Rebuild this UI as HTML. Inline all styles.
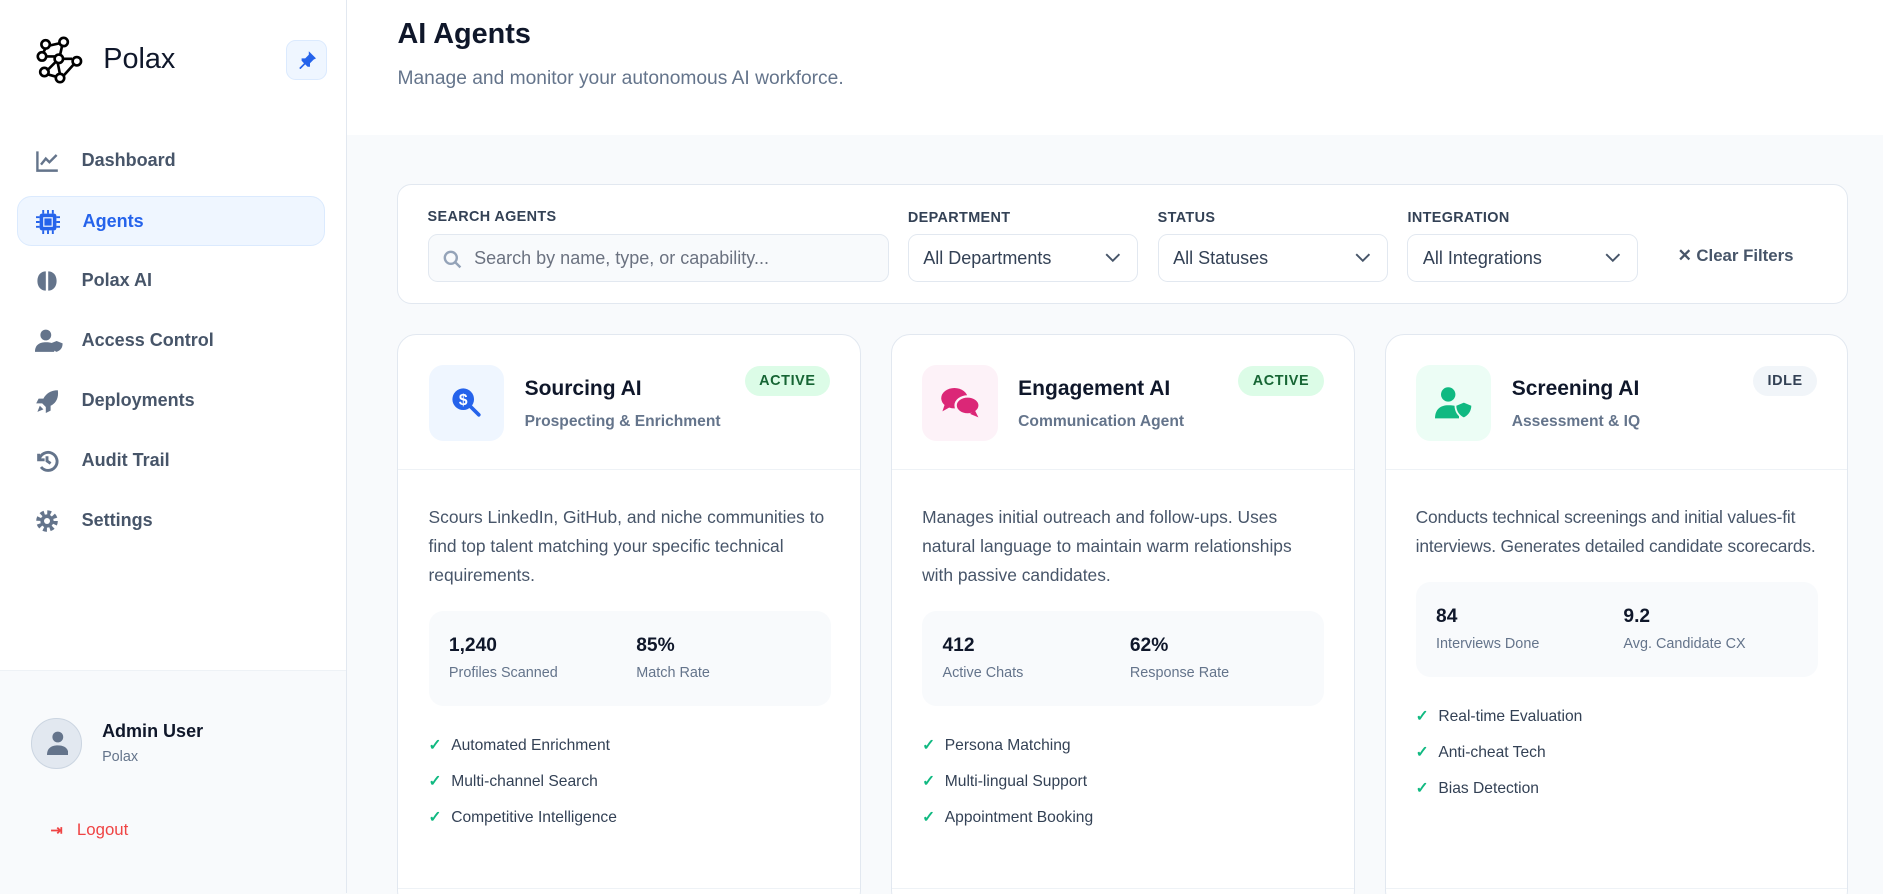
<!DOCTYPE html>
<html><head><meta charset="utf-8"><style>
*{box-sizing:border-box;margin:0;padding:0}
html,body{width:1883px;height:894px;overflow:hidden;background:#f8fafc}
#z{zoom:1.2009;width:1568px;height:744px;position:relative;font-family:"Liberation Sans",sans-serif;color:#0f172a}
.a{position:absolute}
.side{left:0;top:0;width:289px;height:744px;background:#fff;border-right:1px solid #e2e8f0}
.nav{left:14px;width:257px;height:42px;border-radius:12px;font-size:15px;color:#475569;font-weight:bold}
.nav svg{position:absolute;left:15px;top:11px}
.nav span{position:absolute;left:54px;top:12px}
.lbl{font-size:12px;font-weight:bold;color:#334155;letter-spacing:.3px}
.inp{height:40px;border:1px solid #e2e8f0;border-radius:8px;background:#f8fafc;font-size:15px;color:#334155;padding:11px 12px}
.inp svg.ch{position:absolute;right:14px;top:15px}
.card{width:386px;height:480px;background:#fff;border:1px solid #e2e8f0;border-radius:16px;top:278px;overflow:hidden}
.ib{left:25px;top:25px;width:63px;height:63px;border-radius:12px}
.t{left:105px;top:35px;font-size:17.5px;font-weight:bold}
.st{left:105px;top:65px;font-size:13px;color:#64748b;font-weight:bold}
.bd{top:26px;height:25px;border-radius:13px;font-size:12px;font-weight:bold;padding:6px 12px;letter-spacing:.5px}
.hr{left:0;right:0;top:112px;border-top:1px solid #eef2f6}
.ds{left:25px;top:140px;font-size:14.5px;line-height:24px;color:#475569;white-space:nowrap}
.sb{left:25px;width:335px;height:79px;background:#f8fafc;border-radius:12px}
.n{top:20px;font-size:16px;font-weight:bold}
.sl{top:45px;font-size:12px;color:#64748b}
.f{left:25px;font-size:13px;color:#334155}
.f b{color:#10b981;margin-right:8px;font-weight:bold}
</style></head><body><div id="z">
<div class="a side">
 <svg class="a" style="left:30px;top:30px" width="40" height="40" viewBox="0 0 40 40" fill="none" stroke="#000" stroke-width="2.2"><circle cx="8" cy="7" r="3.5"/><circle cx="23" cy="5" r="3.5"/><circle cx="5" cy="17" r="3.5"/><circle cx="19" cy="19" r="3.5"/><circle cx="34" cy="21" r="3.5"/><circle cx="7" cy="30" r="3.5"/><circle cx="20" cy="35" r="3.5"/><path d="M11 8l9-2M8 10l-2 4M8 17h8M22 19h8M22 7l-2 9M18 22l2 10M9 29l8-8M23 33l9-10M10 32l7 2"/></svg>
 <div class="a" style="left:86px;top:36px;font-size:24px">Polax</div>
 <div class="a" style="left:238px;top:33px;width:34px;height:34px;border:1px solid #dbeafe;background:#eff6ff;border-radius:8px"><svg class="a" style="left:9px;top:8px" width="16" height="16" viewBox="0 0 16 16" fill="#2563eb"><path d="M9 1l6 6-2 1-3 3 0 3-2 0-2-2-4 4-1-1 4-4-2-2 0-2 3 0 3-3z"/></svg></div>
 <div class="a nav" style="top:113px"><svg width="20" height="20" viewBox="0 0 20 20" fill="none" stroke="#64748b" stroke-width="2"><path d="M2 2v16h17M5 13l4-5 3 3 6-6"/></svg><span>Dashboard</span></div>
 <div class="a nav" style="top:163px;background:#eff6ff;border:1px solid #dbeafe;color:#2563eb"><svg width="20" height="20" viewBox="0 0 20 20"><rect x="3" y="3" width="14" height="14" rx="2" fill="#2563eb"/><rect x="6" y="6" width="8" height="8" fill="#eff6ff"/><rect x="7" y="7" width="6" height="6" fill="#2563eb"/><path d="M6 0v3M10 0v3M14 0v3M6 17v3M10 17v3M14 17v3M0 6h3M0 10h3M0 14h3M17 6h3M17 10h3M17 14h3" stroke="#2563eb" stroke-width="1.6"/></svg><span>Agents</span></div>
 <div class="a nav" style="top:213px"><svg width="20" height="20" viewBox="0 0 20 20" fill="#64748b"><path d="M9 2C5 2 2 5 2 10s3 8 7 8zM11 2c4 0 7 3 7 8s-3 8-7 8z"/></svg><span>Polax AI</span></div>
 <div class="a nav" style="top:263px"><svg width="24" height="20" viewBox="0 0 24 20" fill="#64748b"><circle cx="9" cy="5" r="4.5"/><path d="M0 19c0-6 4-8 9-8s6 1 7 2v6z"/><path d="M18 10l5 2c0 4-2 6-5 7-3-1-5-3-5-7z"/></svg><span>Access Control</span></div>
 <div class="a nav" style="top:313px"><svg width="20" height="20" viewBox="0 0 20 20" fill="#64748b"><path d="M19 1c-6 0-10 3-12 7H3l-2 4h5l3 3v5l4-2v-4c4-2 7-6 6-13zM4 14l-2 5 5-2z"/></svg><span>Deployments</span></div>
 <div class="a nav" style="top:363px"><svg width="20" height="20" viewBox="0 0 20 20" fill="none" stroke="#64748b" stroke-width="2.4"><path d="M3 4v5h5"/><path d="M3.5 9A7.5 7.5 0 1 1 5 15"/><path d="M10 6v4l3 2"/></svg><span>Audit Trail</span></div>
 <div class="a nav" style="top:413px"><svg width="20" height="20" viewBox="0 0 20 20"><circle cx="10" cy="10" r="7" fill="none" stroke="#64748b" stroke-width="4" stroke-dasharray="3 2.5"/><circle cx="10" cy="10" r="5.5" fill="#64748b"/><circle cx="10" cy="10" r="2.5" fill="#fff"/></svg><span>Settings</span></div>
 <div class="a" style="left:0;top:558px;width:288px;height:186px;background:#f8fafc;border-top:1px solid #eef2f6"></div>
 <div class="a" style="left:26px;top:598px;width:42px;height:42px;border-radius:50%;background:#e2e8f0;border:1px solid #cbd5e1"><svg class="a" style="left:12px;top:10px" width="18" height="20" viewBox="0 0 18 20" fill="#64748b"><circle cx="9" cy="5" r="4.5"/><path d="M0 20c0-6 4-8 9-8s9 2 9 8z"/></svg></div>
 <div class="a" style="left:85px;top:600px;font-size:15px;font-weight:bold">Admin User</div>
 <div class="a" style="left:85px;top:624px;font-size:12px;color:#64748b">Polax</div>
 <div class="a" style="left:42px;top:683px;font-size:14px;color:#ef4444"><span style="font-weight:bold;font-size:12px;margin-right:12px">⇥</span>Logout</div>
</div>
<div class="a" style="left:289px;top:0;width:1279px;height:112px;background:#fff"></div>
<div class="a" style="left:331px;top:15px;font-size:24px;font-weight:bold">AI Agents</div>
<div class="a" style="left:331px;top:57px;font-size:16px;color:#64748b">Manage and monitor your autonomous AI workforce.</div>
<div class="a" style="left:331px;top:153px;width:1208px;height:100px;background:#fff;border:1px solid #e2e8f0;border-radius:12px"></div>
<div class="a lbl" style="left:356px;top:174px">SEARCH AGENTS</div>
<div class="a lbl" style="left:756px;top:175px">DEPARTMENT</div>
<div class="a lbl" style="left:964px;top:175px">STATUS</div>
<div class="a lbl" style="left:1172px;top:175px">INTEGRATION</div>
<div class="a inp" style="left:356px;top:195px;width:384px;color:#6b7280;padding-left:38px"><svg class="a" style="left:12px;top:12px" width="16" height="16" viewBox="0 0 16 16" fill="none" stroke="#94a3b8" stroke-width="2"><circle cx="6.5" cy="6.5" r="5"/><path d="M10.5 10.5l4 4"/></svg>Search by name, type, or capability...</div>
<div class="a inp" style="left:756px;top:195px;width:192px;background:#fff">All Departments<svg class="ch" width="13" height="8" viewBox="0 0 13 8" fill="none" stroke="#475569" stroke-width="1.6"><path d="M1 1l5.5 5.5L12 1"/></svg></div>
<div class="a inp" style="left:964px;top:195px;width:192px;background:#fff">All Statuses<svg class="ch" width="13" height="8" viewBox="0 0 13 8" fill="none" stroke="#475569" stroke-width="1.6"><path d="M1 1l5.5 5.5L12 1"/></svg></div>
<div class="a inp" style="left:1172px;top:195px;width:192px;background:#fff">All Integrations<svg class="ch" width="13" height="8" viewBox="0 0 13 8" fill="none" stroke="#475569" stroke-width="1.6"><path d="M1 1l5.5 5.5L12 1"/></svg></div>
<div class="a" style="left:1397px;top:204px;font-size:14px;font-weight:bold;color:#475569">✕ Clear Filters</div>

<div class="a card" style="left:331px">
 <div class="a ib" style="background:#eff6ff"><svg class="a" style="left:18px;top:18px" width="28" height="28" viewBox="0 0 28 28"><circle cx="11" cy="11" r="9" fill="#2563eb"/><path d="M17 17l7 7" stroke="#2563eb" stroke-width="3" stroke-linecap="round"/><text x="11" y="16" font-size="13" font-weight="bold" fill="#fff" text-anchor="middle" font-family="Liberation Sans">$</text></svg></div>
 <div class="a t">Sourcing AI</div><div class="a st">Prospecting &amp; Enrichment</div>
 <div class="a bd" style="right:25px;background:#dcfce7;color:#166534">ACTIVE</div>
 <div class="a hr"></div>
 <div class="a ds">Scours LinkedIn, GitHub, and niche communities to<br>find top talent matching your specific technical<br>requirements.</div>
 <div class="a sb" style="top:230px"><div class="a n" style="left:17px">1,240</div><div class="a sl" style="left:17px">Profiles Scanned</div><div class="a n" style="left:173px">85%</div><div class="a sl" style="left:173px">Match Rate</div></div>
 <div class="a f" style="top:334px"><b>✓</b>Automated Enrichment</div>
 <div class="a f" style="top:364px"><b>✓</b>Multi-channel Search</div>
 <div class="a f" style="top:394px"><b>✓</b>Competitive Intelligence</div>
 <div class="a hr" style="top:461px"></div>
</div>
<div class="a card" style="left:742px">
 <div class="a ib" style="background:#fdf2f8"><svg class="a" style="left:15px;top:17px" width="34" height="30" viewBox="0 0 34 30" fill="#db2777"><ellipse cx="12" cy="11" rx="11" ry="8.5"/><path d="M4 16l-2 6 7-4z"/><ellipse cx="23" cy="17" rx="10" ry="7.5" stroke="#fdf2f8" stroke-width="2"/><path d="M29 21l3 6-7-3z"/></svg></div>
 <div class="a t">Engagement AI</div><div class="a st">Communication Agent</div>
 <div class="a bd" style="right:25px;background:#dcfce7;color:#166534">ACTIVE</div>
 <div class="a hr"></div>
 <div class="a ds">Manages initial outreach and follow-ups. Uses<br>natural language to maintain warm relationships<br>with passive candidates.</div>
 <div class="a sb" style="top:230px"><div class="a n" style="left:17px">412</div><div class="a sl" style="left:17px">Active Chats</div><div class="a n" style="left:173px">62%</div><div class="a sl" style="left:173px">Response Rate</div></div>
 <div class="a f" style="top:334px"><b>✓</b>Persona Matching</div>
 <div class="a f" style="top:364px"><b>✓</b>Multi-lingual Support</div>
 <div class="a f" style="top:394px"><b>✓</b>Appointment Booking</div>
 <div class="a hr" style="top:461px"></div>
</div>
<div class="a card" style="left:1153px">
 <div class="a ib" style="background:#ecfdf5"><svg class="a" style="left:16px;top:18px" width="32" height="28" viewBox="0 0 32 28" fill="#10b981"><circle cx="11" cy="7" r="6"/><path d="M0 27c0-8 5-11 11-11s8 1 9 3v8z"/><path d="M24 13l7 3c0 6-3 9-7 11-4-2-7-5-7-11z" stroke="#ecfdf5" stroke-width="1.5"/></svg></div>
 <div class="a t">Screening AI</div><div class="a st">Assessment &amp; IQ</div>
 <div class="a bd" style="right:25px;background:#f1f5f9;color:#334155">IDLE</div>
 <div class="a hr"></div>
 <div class="a ds" style="letter-spacing:-.15px">Conducts technical screenings and initial values-fit<br>interviews. Generates detailed candidate scorecards.</div>
 <div class="a sb" style="top:206px"><div class="a n" style="left:17px">84</div><div class="a sl" style="left:17px">Interviews Done</div><div class="a n" style="left:173px">9.2</div><div class="a sl" style="left:173px">Avg. Candidate CX</div></div>
 <div class="a f" style="top:310px"><b>✓</b>Real-time Evaluation</div>
 <div class="a f" style="top:340px"><b>✓</b>Anti-cheat Tech</div>
 <div class="a f" style="top:370px"><b>✓</b>Bias Detection</div>
 <div class="a hr" style="top:461px"></div>
</div>
</div></body></html>
